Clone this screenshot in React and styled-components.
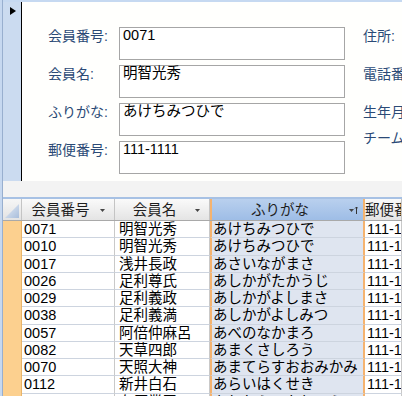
import React from "react";
import styled, { createGlobalStyle } from "styled-components";

const GlobalStyle = createGlobalStyle`
  html, body {
    margin: 0;
    padding: 0;
    background: #ffffff;
    overflow: hidden;
  }
  * {
    box-sizing: border-box;
  }
`;

const FONT = `"Liberation Sans", "Noto Sans CJK JP", sans-serif`;

const fields = [
  { label: "会員番号:", value: "0071" },
  { label: "会員名:", value: "明智光秀" },
  { label: "ふりがな:", value: "あけちみつひで" },
  { label: "郵便番号:", value: "111-1111" },
];

const sideLabels = [
  { text: "住所:", h: 38 },
  { text: "電話番号:", h: 38 },
  { text: "生年月日:", h: 26 },
  { text: "チーム:", h: 17 },
];

const columns = [
  { title: "会員番号" },
  { title: "会員名" },
  { title: "ふりがな", selected: true },
  { title: "郵便番号" },
];

const rows = [
  ["0071", "明智光秀", "あけちみつひで"],
  ["0010", "明智光秀", "あけちみつひで"],
  ["0017", "浅井長政", "あさいながまさ"],
  ["0026", "足利尊氏", "あしかがたかうじ"],
  ["0029", "足利義政", "あしかがよしまさ"],
  ["0038", "足利義満", "あしかがよしみつ"],
  ["0057", "阿倍仲麻呂", "あべのなかまろ"],
  ["0082", "天草四郎", "あまくさしろう"],
  ["0070", "天照大神", "あまてらすおおみかみ"],
  ["0112", "新井白石", "あらいはくせき"],
  ["0121", "在原業平", "ありわらのなりひら"],
];

const App = () => {
  return (
    <>
      <GlobalStyle />
      <Frame>
        <Inner>
          <FormSection>
            <RecordSelector>
              <Pointer />
            </RecordSelector>
            <FormBody>
              <FieldGrid>
                {fields.map((f) => (
                  <React.Fragment key={f.label}>
                    <FieldLabel>{f.label}</FieldLabel>
                    <TextBox>{f.value}</TextBox>
                  </React.Fragment>
                ))}
              </FieldGrid>
              <SideColumn>
                {sideLabels.map((l) => (
                  <SideLabel key={l.text} $h={l.h}>
                    {l.text}
                  </SideLabel>
                ))}
              </SideColumn>
            </FormBody>
          </FormSection>
          <SplitBand />
          <Sheet>
            <HeaderRow>
              <SelectAll>
                <svg width="16" height="16" viewBox="0 0 16 16">
                  <defs>
                    <linearGradient id="sa" x1="0" y1="0" x2="1" y2="1">
                      <stop offset="0" stopColor="#e8eef7" />
                      <stop offset="1" stopColor="#a9bedb" />
                    </linearGradient>
                  </defs>
                  <polygon points="15,1 15,15 1,15" fill="url(#sa)" />
                </svg>
              </SelectAll>
              {columns.map((c) => (
                <HeaderCell key={c.title} $selected={c.selected}>
                  <HeaderText>{c.title}</HeaderText>
                  <DropIcon>
                    <svg width="10" height="10" viewBox="0 0 10 10">
                      <polygon points="1,4 6,4 3.5,7" fill="#444" />
                      {c.selected && (
                        <path
                          d="M8.5 2 L8.5 9 M7 3.5 L8.5 2 L10 3.5"
                          stroke="#333"
                          strokeWidth="1"
                          fill="none"
                        />
                      )}
                    </svg>
                  </DropIcon>
                </HeaderCell>
              ))}
            </HeaderRow>
            {rows.map((r, i) => (
              <DataRow key={i}>
                <RowSelector />
                <Cell $pad={2}>{r[0]}</Cell>
                <Cell $pad={4}>{r[1]}</Cell>
                <Cell $pad={1} $selected>
                  {r[2]}
                </Cell>
                <Cell $pad={2}>111-1111</Cell>
              </DataRow>
            ))}
          </Sheet>
        </Inner>
      </Frame>
    </>
  );
};

export default App;

const Frame = styled.div`
  width: 402px;
  height: 396px;
  overflow: hidden;
  border-left: 2px solid #c6d8f0;
  background: #ffffff;
`;

const Inner = styled.div`
  height: 100%;
  border-left: 1px solid #98afcf;
  display: flex;
  flex-direction: column;
`;

const FormSection = styled.div`
  height: 181px;
  border-top: 2px solid #c6d9f1;
  display: flex;
  flex-shrink: 0;
`;

const RecordSelector = styled.div`
  width: 19px;
  flex-shrink: 0;
  background: #cbdbf0;
  border-right: 1px solid #000000;
  padding: 5px 0 0 7px;
`;

const Pointer = styled.div`
  width: 0;
  height: 0;
  border-top: 4.5px solid transparent;
  border-bottom: 4.5px solid transparent;
  border-left: 6px solid #000000;
`;

const FormBody = styled.div`
  flex: 1;
  min-width: 0;
  overflow: hidden;
  background: #fffffd;
  display: flex;
  padding: 25px 0 0 26px;
`;

const FieldGrid = styled.div`
  display: grid;
  flex-shrink: 0;
  grid-template-columns: 71px 226px;
  grid-auto-rows: 33px;
  row-gap: 5px;
  align-content: start;
`;

const FieldLabel = styled.div`
  font-family: ${FONT};
  font-size: 14px;
  line-height: 17px;
  padding-top: 1px;
  color: #2b4a76;
  white-space: nowrap;
`;

const TextBox = styled.div`
  border: 1px solid #a6a6a6;
  background: #ffffff;
  font-family: ${FONT};
  font-size: 14.5px;
  line-height: 15px;
  padding: 0 0 0 3px;
  color: #000000;
  white-space: nowrap;
`;

const SideColumn = styled.div`
  margin-left: 18px;
  flex-shrink: 0;
  display: flex;
  flex-direction: column;
  padding-top: 1px;
`;

const SideLabel = styled.div`
  height: ${(p) => p.$h}px;
  font-family: ${FONT};
  font-size: 14px;
  line-height: 17px;
  color: #2b4a76;
  white-space: nowrap;
`;

const SplitBand = styled.div`
  height: 18px;
  flex-shrink: 0;
  background: #f3f3f3;
  border-bottom: 2px solid #a7c1e4;
`;

const Sheet = styled.div`
  display: flex;
  flex-direction: column;
  overflow: hidden;
`;

const gridCols = `19px 93px 95px 155px minmax(0, 1fr)`;

const HeaderRow = styled.div`
  display: grid;
  grid-template-columns: ${gridCols};
  height: 22px;
  flex-shrink: 0;
  border-bottom: 1px solid #a9a9a9;
`;

const SelectAll = styled.div`
  background: linear-gradient(#f6f6f6, #e3e3e3);
  border-right: 1px solid #c4c4c4;
  display: flex;
  align-items: flex-end;
  justify-content: flex-end;
  padding: 0 1px 1px 0;
`;

const HeaderCell = styled.div`
  display: flex;
  align-items: center;
  background: ${(p) =>
    p.$selected
      ? "linear-gradient(#b9d0ee, #9ebde6)"
      : "linear-gradient(#fafafa, #e4e4e4)"};
  border-right: ${(p) =>
    p.$selected ? "2px solid #f5b36f" : "1px solid #c4c4c4"};
  border-left: ${(p) => (p.$selected ? "2px solid #f5b36f" : "none")};
  overflow: hidden;
`;

const HeaderText = styled.div`
  flex: 1;
  text-align: center;
  font-family: ${FONT};
  font-size: 14.5px;
  line-height: 17px;
  padding-top: 2px;
  color: #1e1e1e;
  white-space: nowrap;
`;

const DropIcon = styled.div`
  width: 12px;
  margin-right: 3px;
  display: flex;
  align-items: center;
  flex-shrink: 0;
`;

const DataRow = styled.div`
  display: grid;
  grid-template-columns: ${gridCols};
  height: 17.25px;
  flex-shrink: 0;
`;

const RowSelector = styled.div`
  background: #fcd08f;
  border-right: 1px solid #e9b56a;
`;

const Cell = styled.div`
  font-family: ${FONT};
  font-size: 14.5px;
  line-height: 16px;
  color: #000000;
  white-space: nowrap;
  overflow: hidden;
  padding-left: ${(p) => p.$pad}px;
  background: ${(p) => (p.$selected ? "#dfe5f0" : "#ffffff")};
  border-bottom: 1px solid #cdd4df;
  border-right: ${(p) =>
    p.$selected ? "2px solid #f5b36f" : "1px solid #c9c9c9"};
  border-left: ${(p) => (p.$selected ? "2px solid #f5b36f" : "none")};
`;
